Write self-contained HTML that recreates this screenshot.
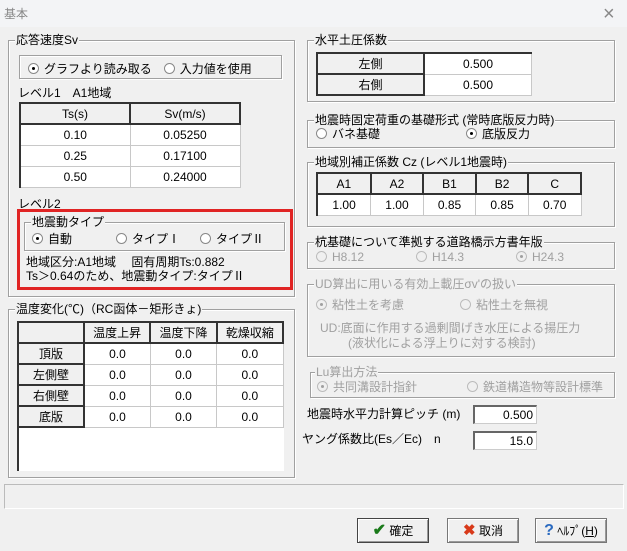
<!DOCTYPE html>
<html><head><meta charset="utf-8"><style>
*{box-sizing:border-box;margin:0;padding:0}
body{width:627px;height:551px;background:#f0f0f0;font-family:"Liberation Sans","Noto Sans CJK JP",sans-serif;font-size:12px;color:#000;position:relative;overflow:hidden}
.a{position:absolute;white-space:nowrap;line-height:14px}
.g{position:absolute;border:1px solid #a0a0a0;box-shadow:1px 1px 0 #fff inset,1px 1px 0 #fff}
.lg{position:absolute;top:-8px;left:6px;background:#f0f0f0;padding:0 1px;line-height:14px;white-space:nowrap}
.r{display:inline-block;width:11px;height:11px;border:1px solid #888;border-radius:50%;background:#fff;vertical-align:-1px;margin-right:5px;position:relative}
.r.on::after{content:"";position:absolute;left:3px;top:3px;width:3px;height:3px;border-radius:50%;background:#000}
.dis{color:#a0a0a0}
.dis .r{border-color:#bbb;background:#f0f0f0}
.dis .r.on::after{background:#a0a0a0}
table{position:absolute;border-collapse:collapse;background:#fff;border-left:2px solid #333;border-top:2px solid #333}
td{border:1px solid #c8c8c8;text-align:center;height:21px;padding:0;font-size:12px}
td.h{background:#f0f0f0;border-right:2px solid #333;border-bottom:2px solid #333;border-top:1px solid #fff;border-left:1px solid #fff}
.inp{position:absolute;background:#fff;border:1px solid #ccc;border-top:2px solid #666;border-left:2px solid #666;text-align:right;padding-right:3px;line-height:16px}
.btn{position:absolute;height:25px;width:72px;background:#f0f0f0;border:1px solid #777;box-shadow:inset 1px 1px 0 #fff,inset -1px -1px 0 #999;text-align:center;line-height:23px;font-size:12px}
</style></head><body>
<div style="position:absolute;left:0;top:0;width:627px;height:27px;background:#f3f4f6"></div>
<div class="a" style="left:4px;top:7px;color:#888">基本</div>
<div class="a" style="left:603px;top:4px;color:#888;font-size:20px;line-height:20px;font-weight:100">×</div>

<div class="g" style="left:8px;top:40px;width:287px;height:257px"><span class="lg">応答速度Sv</span></div>
<div class="g" style="left:19px;top:55px;width:263px;height:24px"></div>
<div class="a" style="left:28px;top:62px"><span class="r on"></span>グラフより読み取る　<span class="r"></span>入力値を使用</div>
<div class="a" style="left:18px;top:86px">レベル1　A1地域</div>
<table style="left:19px;top:102px;width:222px">
<tr><td class="h" style="width:110px">Ts(s)</td><td class="h">Sv(m/s)</td></tr>
<tr><td>0.10</td><td>0.05250</td></tr>
<tr><td>0.25</td><td>0.17100</td></tr>
<tr><td>0.50</td><td>0.24000</td></tr>
</table>
<div class="a" style="left:18px;top:197px">レベル2</div>
<div style="position:absolute;left:17px;top:209px;width:276px;height:81px;border:3px solid #e02424"></div>
<div class="g" style="left:24px;top:222px;width:261px;height:29px"><span class="lg">地震動タイプ</span></div>
<div class="a" style="left:32px;top:232px"><span class="r on"></span>自動</div>
<div class="a" style="left:116px;top:232px"><span class="r"></span>タイプⅠ</div>
<div class="a" style="left:200px;top:232px"><span class="r"></span>タイプⅡ</div>
<div class="a" style="left:26px;top:255px">地域区分:A1地域　 固有周期Ts:0.882</div>
<div class="a" style="left:26px;top:269px">Ts＞0.64のため、地震動タイプ:タイプⅡ</div>

<div class="g" style="left:8px;top:309px;width:287px;height:169px"><span class="lg">温度変化(℃)（RC函体－矩形きょ)</span></div>
<div style="position:absolute;left:17px;top:321px;width:267px;height:150px;background:#fff;border-left:2px solid #333;border-top:2px solid #333"></div>
<table style="left:17px;top:321px;width:267px">
<tr><td class="h" style="width:66px"></td><td class="h">温度上昇</td><td class="h">温度下降</td><td class="h">乾燥収縮</td></tr>
<tr><td class="h">頂版</td><td>0.0</td><td>0.0</td><td>0.0</td></tr>
<tr><td class="h">左側壁</td><td>0.0</td><td>0.0</td><td>0.0</td></tr>
<tr><td class="h">右側壁</td><td>0.0</td><td>0.0</td><td>0.0</td></tr>
<tr><td class="h">底版</td><td>0.0</td><td>0.0</td><td>0.0</td></tr>
</table>
<div style="position:absolute;left:4px;top:484px;width:620px;height:25px;border:1px solid #bbb;border-bottom-color:#fff;border-right-color:#fff"></div>

<div class="g" style="left:307px;top:40px;width:308px;height:62px"><span class="lg">水平土圧係数</span></div>
<table style="left:316px;top:52px;width:216px">
<tr><td class="h" style="width:107px">左側</td><td>0.500</td></tr>
<tr><td class="h">右側</td><td>0.500</td></tr>
</table>
<div class="g" style="left:307px;top:120px;width:308px;height:28px"><span class="lg">地震時固定荷重の基礎形式 (常時底版反力時)</span></div>
<div class="a" style="left:316px;top:127px"><span class="r"></span>バネ基礎</div>
<div class="a" style="left:466px;top:127px"><span class="r on"></span>底版反力</div>
<div class="g" style="left:307px;top:162px;width:308px;height:65px"><span class="lg">地域別補正係数 Cz (レベル1地震時)</span></div>
<table style="left:316px;top:172px;width:266px">
<tr><td class="h">A1</td><td class="h">A2</td><td class="h">B1</td><td class="h">B2</td><td class="h">C</td></tr>
<tr><td>1.00</td><td>1.00</td><td>0.85</td><td>0.85</td><td>0.70</td></tr>
</table>
<div class="g" style="left:307px;top:242px;width:308px;height:27px"><span class="lg">杭基礎について準拠する道路橋示方書年版</span></div>
<div class="a dis" style="left:316px;top:250px"><span class="r"></span>H8.12</div>
<div class="a dis" style="left:416px;top:250px"><span class="r"></span>H14.3</div>
<div class="a dis" style="left:516px;top:250px"><span class="r on"></span>H24.3</div>
<div class="g" style="left:307px;top:284px;width:308px;height:73px"><span class="lg dis">UD算出に用いる有効上載圧σv'の扱い</span></div>
<div class="a dis" style="left:316px;top:298px"><span class="r on"></span>粘性土を考慮</div>
<div class="a dis" style="left:460px;top:298px"><span class="r"></span>粘性土を無視</div>
<div class="a dis" style="left:320px;top:321px">UD:底面に作用する過剰間げき水圧による揚圧力</div>
<div class="a dis" style="left:348px;top:336px">(液状化による浮上りに対する検討)</div>
<div class="g" style="left:310px;top:372px;width:305px;height:26px"><span class="lg dis" style="left:4px">Lu算出方法</span></div>
<div class="a dis" style="left:317px;top:380px"><span class="r on"></span>共同溝設計指針</div>
<div class="a dis" style="left:467px;top:380px"><span class="r"></span>鉄道構造物等設計標準</div>
<div class="a" style="left:307px;top:407px">地震時水平力計算ピッチ (m)</div>
<div class="inp" style="left:473px;top:405px;width:64px;height:19px">0.500</div>
<div class="a" style="left:302px;top:432px">ヤング係数比(Es／Ec)　n</div>
<div class="inp" style="left:473px;top:431px;width:64px;height:19px">15.0</div>

<div class="btn" style="left:357px;top:518px;border-color:#444"><span style="color:#1a7a1a;font-weight:bold;font-size:16px">✔</span> 確定</div>
<div class="btn" style="left:447px;top:518px"><span style="color:#d83a1a;font-weight:bold;font-size:15px">✖</span> 取消</div>
<div class="btn" style="left:535px;top:518px"><span style="color:#2a6ac0;font-weight:bold;font-size:16px">?</span> ﾍﾙﾌﾟ(<u>H</u>)</div>
</body></html>
